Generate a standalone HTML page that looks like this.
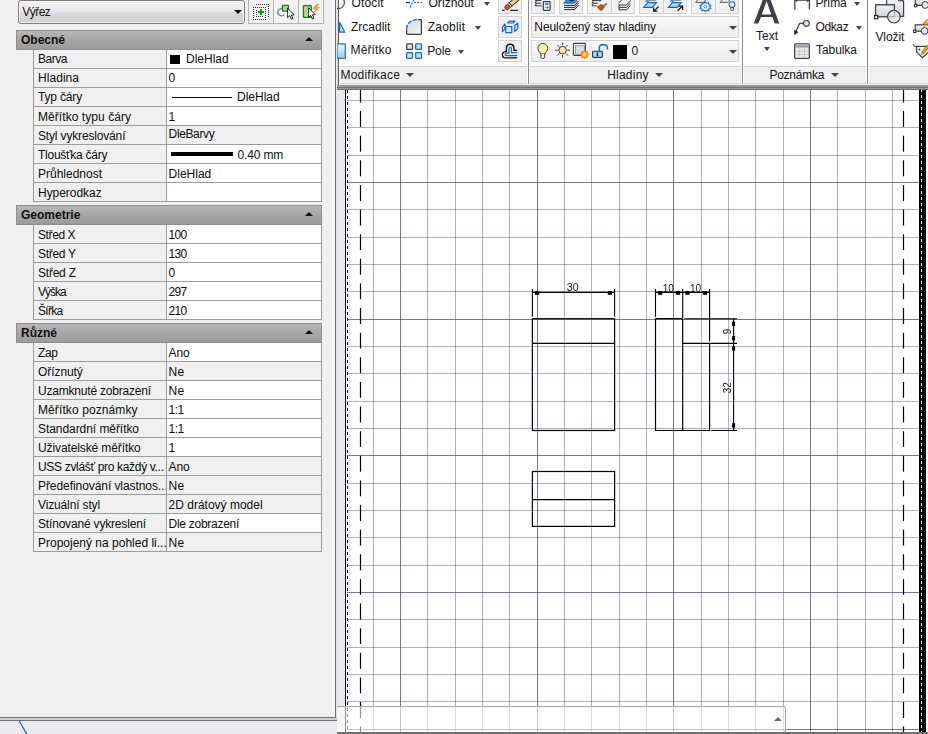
<!DOCTYPE html>
<html><head><meta charset="utf-8"><title>AutoCAD</title>
<style>
html,body{margin:0;padding:0;}
body{width:928px;height:734px;overflow:hidden;position:relative;background:#f0f0f0;font-family:"Liberation Sans",sans-serif;font-size:12px;color:#0c0c0c;}
.abs{position:absolute;}
.t{position:absolute;white-space:nowrap;line-height:14px;height:14px;font-size:12px;color:#141414;}
.hdr{position:absolute;left:16px;width:306px;height:20px;background:linear-gradient(#b9b9b9,#a8a8a8 45%,#9a9a9a);box-shadow:inset 0 0 0 1px #8e8e8e;}
.hdr b{position:absolute;left:5px;top:3px;font-size:12px;line-height:14px;color:#111;}
.hdr i{position:absolute;left:288.6px;top:6.8px;width:0;height:0;border-left:4px solid transparent;border-right:4px solid transparent;border-bottom:4px solid #111;}
.row{position:absolute;left:33px;width:287px;height:18px;border-left:1px solid #9c9c9c;border-right:1px solid #9c9c9c;border-bottom:1px solid #9c9c9c;box-sizing:content-box;background:#f0f0f0;}
.row .l{position:absolute;left:4px;top:3px;line-height:14px;white-space:nowrap;}
.row .v{position:absolute;left:132px;top:0;width:154px;height:18px;border-left:1px solid #9c9c9c;background:#fff;}
.row .v.g{background:#f0f0f0;}
.row .v span{position:absolute;left:1.6px;top:3px;line-height:14px;white-space:nowrap;}

.btn{position:absolute;background:#f1f1f1;border:1px solid #d2d2d2;box-sizing:border-box;}
.sep{position:absolute;top:0;width:1px;height:84px;background:#8c8c8c;}
.ttl{position:absolute;top:66px;height:18px;background:#f0f0f0;border-top:1px solid #d2d4d6;border-bottom:1px solid #d0d2d4;box-sizing:border-box;}
.dd{position:absolute;width:0;height:0;border-left:3px solid transparent;border-right:3px solid transparent;border-top:4px solid #444;}
.dd2{position:absolute;width:0;height:0;border-left:4px solid transparent;border-right:4px solid transparent;border-top:4px solid #444;}
</style></head><body>

<!-- drawing canvas -->
<div class="abs" style="left:337px;top:90px;width:591px;height:644px;background:#e9eaee;"></div>
<div class="abs" style="left:346px;top:90px;width:573px;height:644px;background:#fff;"></div>
<svg class="abs" style="left:0;top:0" width="928" height="734" viewBox="0 0 928 734">
<g shape-rendering="crispEdges" stroke-width="1">
<line x1="373.5" y1="90" x2="373.5" y2="732" stroke="#3c4064" stroke-opacity="0.42"/>
<line x1="400.5" y1="90" x2="400.5" y2="732" stroke="#3c4064" stroke-opacity="0.70"/>
<line x1="427.5" y1="90" x2="427.5" y2="732" stroke="#3c4064" stroke-opacity="0.42"/>
<line x1="455.5" y1="90" x2="455.5" y2="732" stroke="#3c4064" stroke-opacity="0.42"/>
<line x1="482.5" y1="90" x2="482.5" y2="732" stroke="#3c4064" stroke-opacity="0.42"/>
<line x1="509.5" y1="90" x2="509.5" y2="732" stroke="#3c4064" stroke-opacity="0.42"/>
<line x1="537.5" y1="90" x2="537.5" y2="732" stroke="#3c4064" stroke-opacity="0.70"/>
<line x1="564.5" y1="90" x2="564.5" y2="732" stroke="#3c4064" stroke-opacity="0.42"/>
<line x1="591.5" y1="90" x2="591.5" y2="732" stroke="#3c4064" stroke-opacity="0.42"/>
<line x1="619.5" y1="90" x2="619.5" y2="732" stroke="#3c4064" stroke-opacity="0.42"/>
<line x1="646.5" y1="90" x2="646.5" y2="732" stroke="#3c4064" stroke-opacity="0.42"/>
<line x1="673.5" y1="90" x2="673.5" y2="732" stroke="#3c4064" stroke-opacity="0.70"/>
<line x1="701.5" y1="90" x2="701.5" y2="732" stroke="#3c4064" stroke-opacity="0.42"/>
<line x1="728.5" y1="90" x2="728.5" y2="732" stroke="#3c4064" stroke-opacity="0.42"/>
<line x1="755.5" y1="90" x2="755.5" y2="732" stroke="#3c4064" stroke-opacity="0.42"/>
<line x1="783.5" y1="90" x2="783.5" y2="732" stroke="#3c4064" stroke-opacity="0.42"/>
<line x1="810.5" y1="90" x2="810.5" y2="732" stroke="#3c4064" stroke-opacity="0.70"/>
<line x1="837.5" y1="90" x2="837.5" y2="732" stroke="#3c4064" stroke-opacity="0.42"/>
<line x1="865.5" y1="90" x2="865.5" y2="732" stroke="#3c4064" stroke-opacity="0.42"/>
<line x1="892.5" y1="90" x2="892.5" y2="732" stroke="#3c4064" stroke-opacity="0.42"/>
<line x1="347" y1="100.5" x2="919" y2="100.5" stroke="#3c4064" stroke-opacity="0.42"/>
<line x1="347" y1="127.5" x2="919" y2="127.5" stroke="#3c4064" stroke-opacity="0.42"/>
<line x1="347" y1="155.5" x2="919" y2="155.5" stroke="#3c4064" stroke-opacity="0.42"/>
<line x1="347" y1="182.5" x2="919" y2="182.5" stroke="#3c4064" stroke-opacity="0.70"/>
<line x1="347" y1="209.5" x2="919" y2="209.5" stroke="#3c4064" stroke-opacity="0.42"/>
<line x1="347" y1="237.5" x2="919" y2="237.5" stroke="#3c4064" stroke-opacity="0.42"/>
<line x1="347" y1="264.5" x2="919" y2="264.5" stroke="#3c4064" stroke-opacity="0.42"/>
<line x1="347" y1="291.5" x2="919" y2="291.5" stroke="#3c4064" stroke-opacity="0.42"/>
<line x1="347" y1="319.5" x2="919" y2="319.5" stroke="#3c4064" stroke-opacity="0.70"/>
<line x1="347" y1="346.5" x2="919" y2="346.5" stroke="#3c4064" stroke-opacity="0.42"/>
<line x1="347" y1="373.5" x2="919" y2="373.5" stroke="#3c4064" stroke-opacity="0.42"/>
<line x1="347" y1="401.5" x2="919" y2="401.5" stroke="#3c4064" stroke-opacity="0.42"/>
<line x1="347" y1="428.5" x2="919" y2="428.5" stroke="#3c4064" stroke-opacity="0.42"/>
<line x1="347" y1="455.5" x2="919" y2="455.5" stroke="#3c4064" stroke-opacity="0.70"/>
<line x1="347" y1="483.5" x2="919" y2="483.5" stroke="#3c4064" stroke-opacity="0.42"/>
<line x1="347" y1="510.5" x2="919" y2="510.5" stroke="#3c4064" stroke-opacity="0.42"/>
<line x1="347" y1="537.5" x2="919" y2="537.5" stroke="#3c4064" stroke-opacity="0.42"/>
<line x1="347" y1="565.5" x2="919" y2="565.5" stroke="#3c4064" stroke-opacity="0.42"/>
<line x1="347" y1="592.5" x2="919" y2="592.5" stroke="#3c4064" stroke-opacity="0.70"/>
<line x1="347" y1="619.5" x2="919" y2="619.5" stroke="#3c4064" stroke-opacity="0.42"/>
<line x1="347" y1="647.5" x2="919" y2="647.5" stroke="#3c4064" stroke-opacity="0.42"/>
<line x1="347" y1="674.5" x2="919" y2="674.5" stroke="#3c4064" stroke-opacity="0.42"/>
<line x1="347" y1="701.5" x2="919" y2="701.5" stroke="#3c4064" stroke-opacity="0.42"/>
<line x1="347" y1="729.5" x2="919" y2="729.5" stroke="#3c4064" stroke-opacity="0.70"/>
</g>
<g shape-rendering="crispEdges">
<rect x="345" y="90" width="1" height="642" fill="#000"/>
<line x1="347.5" y1="90" x2="347.5" y2="732" stroke="#000" stroke-width="1" stroke-dasharray="3 3" stroke-dashoffset="0"/>
<rect x="919" y="90" width="7" height="642" fill="#000"/>
<line x1="921.5" y1="89" x2="921.5" y2="732" stroke="#fff" stroke-width="1" stroke-dasharray="3 3"/>
<rect x="926" y="90" width="2" height="642" fill="#f4f4f7"/>
</g>
<g stroke="#000" stroke-width="1.2" stroke-dasharray="15.9 8.72">
<line x1="360.5" y1="86.5" x2="360.5" y2="732"/>
<line x1="903.5" y1="86.5" x2="903.5" y2="732"/>
</g>
<g stroke="#000" stroke-width="1.2" fill="none">
<rect x="532.4" y="318.7" width="82.2" height="111.8"/>
<line x1="532.4" y1="343.4" x2="614.6" y2="343.4"/>
<rect x="532.4" y="471.5" width="82.2" height="54.9"/>
<line x1="532.4" y1="499.6" x2="614.6" y2="499.6"/>
<path d="M655.5 318.7H682.7 M655.5 318.7V430.5H709.6V343.4H682.7 M682.7 318.7V430.5"/>
</g>
<g stroke="#000" stroke-width="1.1" fill="none">
<path d="M532.4 289V316.8 M614.6 289V316.8 M532.4 292.4H614.6"/>
<path d="M655.5 289V316.8 M682.7 289V318 M709.6 289V341.6 M655.5 292.4H709.6"/>
<path d="M684.4 318.7H737 M710.4 343.4H737 M711.3 430.5H737 M733.6 318.7V430.5"/>
</g>
<g fill="#000" stroke="none">
<path d="M532.4 292.4L539.2 291.4V293.4Z"/><rect x="535.0" y="291.0" width="4.2" height="3.8"/>
<path d="M614.6 292.4L607.8 291.4V293.4Z"/><rect x="607.8" y="291.0" width="4.2" height="3.8"/>
<path d="M655.5 292.4L662.3 291.4V293.4Z"/><rect x="658.1" y="291.0" width="4.2" height="3.8"/>
<path d="M682.7 292.4L675.9 291.4V293.4Z"/><rect x="675.9" y="291.0" width="4.2" height="3.8"/>
<path d="M682.7 292.4L689.5 291.4V293.4Z"/><rect x="685.3" y="291.0" width="4.2" height="3.8"/>
<path d="M709.6 292.4L702.8 291.4V293.4Z"/><rect x="702.8" y="291.0" width="4.2" height="3.8"/>
<path d="M733.6 318.7L732.6 325.9H734.6Z"/><rect x="732.1" y="321.7" width="3" height="4.2"/>
<path d="M733.6 343.4L732.6 336.2H734.6Z"/><rect x="732.1" y="336.2" width="3" height="4.2"/>
<path d="M733.6 343.4L732.6 350.6H734.6Z"/><rect x="732.1" y="346.4" width="3" height="4.2"/>
<path d="M733.6 430.5L732.6 423.3H734.6Z"/><rect x="732.1" y="423.3" width="3" height="4.2"/>
</g>
</svg>
<svg class="abs" style="left:0;top:0;will-change:transform;transform:translateZ(0)" width="928" height="734" viewBox="0 0 928 734">
<g font-family="Liberation Sans, sans-serif" font-size="10" fill="#111" text-anchor="middle" opacity="0.999">
<text x="572.7" y="290.9" textLength="11.9" lengthAdjust="spacingAndGlyphs">30</text>
<text x="668.3" y="292.4">10</text>
<text x="695.6" y="292.4">10</text>
<text transform="translate(730.7 331.5) rotate(-90)" x="0" y="0">9</text>
<text transform="translate(730.7 387.7) rotate(-90)" x="0" y="0">32</text>
</g>
</svg>
<div class="abs" style="left:337px;top:706px;width:449px;height:27px;background:rgba(255,255,255,0.56);border:1px solid #a4a4a4;border-left:none;border-radius:0 3px 3px 0;box-sizing:border-box;"></div>
<div class="abs" style="left:774px;top:717px;width:0;height:0;border-left:4px solid transparent;border-right:4px solid transparent;border-bottom:4px solid #6a6a6a;"></div>
<div class="abs" style="left:337px;top:732px;width:591px;height:2px;background:#707070;"></div>
<!-- ribbon -->
<div class="abs" style="left:337px;top:0;width:591px;height:90px;background:#fff;"></div>
<div class="abs" style="left:337px;top:0;width:1px;height:88px;background:#dcdcdc;"></div>
<div class="abs" style="left:338px;top:0;width:1px;height:88px;background:#585858;"></div>
<div class="abs" style="left:337px;top:85px;width:591px;height:1px;background:#8a8a8a;"></div>
<div class="abs" style="left:337px;top:86px;width:591px;height:1px;background:#a8a8a8;"></div>
<div class="abs" style="left:337px;top:87px;width:591px;height:1px;background:#6a6a6a;"></div>
<div class="abs" style="left:337px;top:88px;width:591px;height:1px;background:#9a9a9a;"></div>
<div class="abs" style="left:337px;top:89px;width:591px;height:1px;background:#6e6e6e;"></div>
<div class="ttl" style="left:339px;width:188px;border-left:1px solid #fafafa;"></div>
<div class="ttl" style="left:530px;width:211px;"></div>
<div class="ttl" style="left:744px;width:122px;"></div>
<div class="ttl" style="left:869px;width:59px;"></div>
<div class="sep" style="left:528px;"></div><div class="sep" style="left:742px;"></div><div class="sep" style="left:867px;"></div>
<div class="btn" style="left:498px;top:-8px;width:24px;height:22px;"></div>
<div class="btn" style="left:498px;top:16px;width:24px;height:22px;"></div>
<div class="btn" style="left:498px;top:40px;width:24px;height:22px;"></div>
<div class="btn" style="left:531px;top:-8px;width:24px;height:22px;"></div>
<div class="btn" style="left:559px;top:-8px;width:24px;height:22px;"></div>
<div class="btn" style="left:587px;top:-8px;width:48px;height:22px;"></div>
<div class="btn" style="left:639px;top:-8px;width:48px;height:22px;"></div>
<div class="btn" style="left:691px;top:-8px;width:48px;height:22px;"></div>
<div class="abs" style="left:611px;top:0;width:1px;height:13px;background:#d2d2d2;"></div>
<div class="abs" style="left:663px;top:0;width:1px;height:13px;background:#d2d2d2;"></div>
<div class="abs" style="left:715px;top:0;width:1px;height:13px;background:#d2d2d2;"></div>
<div class="btn" style="left:531px;top:16px;width:208px;height:22px;background:linear-gradient(#fafafa,#ececec);"></div>
<div class="btn" style="left:531px;top:40px;width:208px;height:22px;background:linear-gradient(#fafafa,#ececec);"></div>
<div class="abs" style="left:613px;top:45px;width:14px;height:14px;background:#000;"></div>
<div class="t" style="left:351.5px;top:-4.5px;letter-spacing:0.16px;">Otočit</div>
<div class="t" style="left:351px;top:19.5px;">Zrcadlit</div>
<div class="t" style="left:350.6px;top:43px;letter-spacing:0.12px;">Měřítko</div>
<div class="t" style="left:428.5px;top:-4.5px;letter-spacing:-0.1px;">Oříznout</div>
<div class="t" style="left:427.8px;top:19.5px;letter-spacing:0.2px;">Zaoblit</div>
<div class="t" style="left:427.2px;top:43.5px;letter-spacing:-0.1px;">Pole</div>
<div class="t" style="left:340.4px;top:67.5px;letter-spacing:0.24px;">Modifikace</div>
<div class="t" style="left:534.3px;top:19.5px;letter-spacing:-0.08px;">Neuložený stav hladiny</div>
<div class="t" style="left:631.5px;top:43.5px;">0</div>
<div class="t" style="left:607.2px;top:67.5px;letter-spacing:0.22px;">Hladiny</div>
<div class="t" style="left:756px;top:29.299999999999997px;">Text</div>
<div class="t" style="left:815.5px;top:-4.5px;letter-spacing:-0.22px;">Přímá</div>
<div class="t" style="left:815.5px;top:19.5px;letter-spacing:-0.38px;">Odkaz</div>
<div class="t" style="left:816px;top:43px;letter-spacing:-0.07px;">Tabulka</div>
<div class="t" style="left:769.4px;top:67.5px;letter-spacing:-0.24px;">Poznámka</div>
<div class="t" style="left:875.4px;top:29.5px;letter-spacing:-0.06px;">Vložit</div>
<div class="dd" style="left:483.5px;top:2px;"></div>
<div class="dd" style="left:474.5px;top:26px;"></div>
<div class="dd" style="left:457.5px;top:50px;"></div>
<div class="dd2" style="left:406px;top:73px;"></div>
<div class="dd2" style="left:655px;top:73px;"></div>
<div class="dd2" style="left:831px;top:73px;"></div>
<div class="dd2" style="left:728.5px;top:25.5px;"></div>
<div class="dd2" style="left:728.5px;top:49.5px;"></div>
<div class="dd" style="left:763.5px;top:47px;"></div>
<div class="dd" style="left:853.5px;top:2px;"></div>
<div class="dd" style="left:855.5px;top:26px;"></div>

<svg class="abs" style="left:0;top:0" width="928" height="90" viewBox="0 0 928 90">
<defs>
<linearGradient id="gb" x1="0" y1="0" x2="0" y2="1"><stop offset="0" stop-color="#eef6fb"/><stop offset="1" stop-color="#9ecbe6"/></linearGradient>
<linearGradient id="gg" x1="0" y1="0" x2="0" y2="1"><stop offset="0" stop-color="#f4f5f6"/><stop offset="1" stop-color="#cfd3d8"/></linearGradient>
<linearGradient id="gg2" x1="0" y1="0" x2="1" y2="1"><stop offset="0" stop-color="#d4d7db"/><stop offset="1" stop-color="#f6f6f7"/></linearGradient>
<radialGradient id="gs"><stop offset="0" stop-color="#fff27a"/><stop offset="0.5" stop-color="#ffc820"/><stop offset="1" stop-color="#ff7a00"/></radialGradient>
</defs>
<!-- rotate arc -->
<circle cx="338.4" cy="2.6" r="6" fill="none" stroke="#4a4e56" stroke-width="1.2"/>
<!-- mirror triangle -->
<path d="M339.6 22.2L344.8 32.2H339.6Z" fill="#cfe4f3" stroke="#1b6ec2" stroke-width="1.2"/>
<!-- scale rect -->
<rect x="337" y="43.9" width="8.3" height="14.4" fill="url(#gb)" stroke="#1b6ec2" stroke-width="1.2"/>
<!-- trim -->
<path d="M406 2.5H410" stroke="#222" stroke-width="1.2" fill="none"/>
<path d="M414 -0.5L409.3 8.8" stroke="#1565c8" stroke-width="1.3" stroke-dasharray="2.2 1.2" fill="none"/>
<path d="M414 2.5H422" stroke="#1565c8" stroke-width="1.2" stroke-dasharray="2 1.2" fill="none"/>
<!-- fillet -->
<path d="M418 19.6H420.6Q421.4 19.6 421.4 20.4V33.6Q421.4 34.4 420.6 34.4H407.4Q406.6 34.4 406.6 33.6V29.5C406.6 24 411 19.6 418 19.6Z" fill="url(#gg2)" stroke="none"/>
<path d="M418 19.6H420.6Q421.4 19.6 421.4 20.4V33.6Q421.4 34.4 420.6 34.4H407.4Q406.6 34.4 406.6 33.6V29.6" fill="none" stroke="#3a3f48" stroke-width="1.3"/>
<path d="M406.6 29.3C406.6 23.6 411 19.6 417.2 19.6" fill="none" stroke="#1565c8" stroke-width="1.4" stroke-dasharray="4.5 1.2"/>
<!-- array -->
<rect x="406.7" y="43.8" width="5.8" height="5.6" rx="0.6" fill="#ececee" stroke="#3a3f48" stroke-width="1.3"/>
<rect x="415.7" y="43.8" width="5.8" height="5.6" rx="0.6" fill="#c6dfee" stroke="#1b6ec2" stroke-width="1.3"/>
<rect x="406.7" y="52.7" width="5.8" height="5.6" rx="0.6" fill="#c6dfee" stroke="#1b6ec2" stroke-width="1.3"/>
<rect x="415.7" y="52.7" width="5.8" height="5.6" rx="0.6" fill="#c6dfee" stroke="#1b6ec2" stroke-width="1.3"/>
<!-- eraser -->
<g>
<path d="M502 10.4H504.7 M510.2 10.4H518" stroke="#2a2a2a" stroke-width="1.1" fill="none"/>
<path d="M509.1 2.8L518 -5L520.9 -1.7L512 6.1Z" fill="#dcb87e" stroke="#2e2214" stroke-width="1"/>
<path d="M510.6 3.2L518.6 -3.8L519.4 -2.9L511.4 4.1Z" fill="#f6e8c6"/>
<path d="M507.45 4.2L509.1 2.8L512 6.1L510.35 7.5Z" fill="#f2f2f2" stroke="#2e2214" stroke-width="0.8"/>
<ellipse cx="507.3" cy="7.2" rx="2.7" ry="2.35" transform="rotate(-41 507.3 7.2)" fill="#e24e08" stroke="#7a2600" stroke-width="0.7"/>
</g>
<!-- explode box -->
<g stroke="#1565c8" stroke-width="1.2" stroke-linejoin="round">
<path d="M511.8 26.6L514 24.4V30.4L511.8 32.6Z" fill="#eef6fa" stroke="#b8d4e8" stroke-width="0.8"/>
<rect x="505.7" y="26.5" width="6.1" height="6.2" fill="#cbe6f4"/>
<path d="M507.6 23L509.6 21.2H515L513 23Z" fill="#e3f1f9"/>
<path d="M502.4 27.2L505 23.9V28.8L502.4 31.6Z" fill="#d8ebf6"/>
<path d="M514.8 25.4L517.8 22.9V28.6L514.8 31.6Z" fill="#d8ebf6"/>
</g>
<!-- offset -->
<path d="M517.2 57.9H505.4C502.8 57.9 502.4 55.8 502.4 54.6C502.4 52.4 503.8 51.6 506.4 51.6V48.6C506.4 45.6 508 44.3 510.2 44.3C512.4 44.3 514 45.6 514 48.6V50.4H517.2" fill="none" stroke="#111" stroke-width="1.4"/>
<path d="M517.2 55.6H506.4C505.4 55.6 505.2 55 505.2 54.4C505.2 53.6 505.6 53.2 506.6 53.2H509V49.2C509 47.6 509.4 47 510.2 47C511 47 511.5 47.6 511.5 49.2V52.6H517.2" fill="none" stroke="#1565c8" stroke-width="1.2"/>

<!-- layer toolbar icons -->
<g stroke="#333a44" stroke-width="1" fill="none">
<path d="M535.2 0.6H541.4 M536.6 0.6L535.2 3.2H541 M536.6 3.2L535.2 5.8H541.6"/>
<rect x="543.3" y="1.6" width="6.8" height="8.8" rx="0.8" fill="#fff" stroke-width="1.2"/>
</g>
<rect x="545" y="3.2" width="3.4" height="1.6" fill="#1b6ec2"/>
<path d="M544.8 7.4H548.4 M547 6.2L548.4 7.4L547 8.6" stroke="#1b6ec2" stroke-width="0.8" fill="none"/>
<!-- icon 2 stack -->
<path d="M568 -2L563.6 3.2H574.4L578.8 -2Z" fill="#3b8ad4" stroke="#15508f" stroke-width="0.8"/>
<ellipse cx="571.6" cy="0" rx="2.4" ry="1.2" fill="#123"/>
<g stroke="#222a33" stroke-width="1" fill="none">
<path d="M564 5.4H574.6L578.6 0.8 M564 7.4H574.6L578.6 2.8 M564 9.6H574.6L578.6 5"/>
</g>
<!-- icon 3 layers + brush -->
<g stroke="#333a44" stroke-width="1" fill="none">
<path d="M592 0.6H601 M593.6 0.6L592 3.2H598 M593.6 3.2L592 5.8H596.6 M601.4 -0.5L600 1.4"/>
</g>
<path d="M597.2 6.6L601.6 4.2L604.4 7.6L601.2 10.8Q598.6 9.8 597.2 6.6Z" fill="#b55a12" stroke="#7a3a08" stroke-width="0.5"/>
<path d="M602.8 5.8L606.4 3.2L607 4L604 6.8Z" fill="#c8823a" stroke="#5a3210" stroke-width="0.5"/>
<!-- icon 4 layers outline -->
<g stroke="#333a44" stroke-width="1" fill="none">
<path d="M618.4 5H626.6L630.6 0.4 M618.6 7.4H626.6L630.6 2.8 M618.6 9.8H626.6L630.6 5.2 M622 -0.5L618.4 3.4 M620 5L618.4 7.2 M620 7.6L618.4 9.6"/>
</g>
<!-- icon 5 -->
<path d="M647.6 2.6L643.6 7.4H652.4L656.4 2.6Z" fill="#a8d4ee" stroke="#1565c8" stroke-width="1.1"/>
<path d="M646 0H656 M645.2 1.2H649" stroke="#1565c8" stroke-width="1" fill="none"/>
<path d="M648.6 -0.6H656.4" stroke="#222" stroke-width="1.4" fill="none"/>
<path d="M658.6 6.6L654.4 10.6 M653.6 7.4V11.2H657.4" stroke="#111" stroke-width="1.3" fill="none"/>
<!-- icon 6 -->
<path d="M672.4 2.6L668.4 7.4H677.2L681.2 2.6Z" fill="#a8d4ee" stroke="#1565c8" stroke-width="1.1"/>
<path d="M670.8 0H680.8 M670 1.2H673.8" stroke="#1565c8" stroke-width="1" fill="none"/>
<path d="M673.4 -0.6H681.2" stroke="#222" stroke-width="1.4" fill="none"/>
<path d="M677.6 10.8L682 6.6 M678.6 6.2H682.6V10" stroke="#111" stroke-width="1.3" fill="none"/>
<!-- icon 7 snowflake -->
<path d="M698.4 -0.5L695.6 2.4H703.6L706 -0.5" stroke="#555c66" stroke-width="1" fill="none"/>
<g stroke="#1b6ec2" stroke-width="1.1" fill="#eef6fc">
<path d="M705.4 1.8L707 3.4L708.8 2.6L708.8 4.6L710.8 5.4L709.6 6.8L710.8 8.4L708.8 9L708.8 10.8L707 10.2L705.4 11.4L703.8 10.2L702 10.8L702 9L700 8.4L701.2 6.8L700 5.4L702 4.6L702 2.6L703.8 3.4Z"/>
</g>
<circle cx="705.4" cy="6.6" r="1.3" fill="#fff" stroke="#1b6ec2" stroke-width="0.8"/>
<!-- icon 8 bulb -->
<path d="M722.8 -0.5L720 2.4H728L730.4 -0.5" stroke="#555c66" stroke-width="1" fill="none"/>
<circle cx="732" cy="4.6" r="2.9" fill="#e4f1fb" stroke="#1b6ec2" stroke-width="1.1"/>
<rect x="730.8" y="7.4" width="2.6" height="3" rx="0.6" fill="#fff" stroke="#2b3a55" stroke-width="1"/>

<!-- combo2 icons -->
<!-- bulb -->
<path d="M542.8 43.5C539.8 43.5 537.9 45.7 537.9 48.2C537.9 50.6 539.6 51.8 540.6 53.8H545C546 51.8 547.7 50.6 547.7 48.2C547.7 45.7 545.8 43.5 542.8 43.5Z" fill="#fdf0ae" stroke="#3c3a30" stroke-width="1"/>
<path d="M540.9 53.8V56.8Q540.9 58.5 542.8 58.5Q544.7 58.5 544.7 56.8V53.8" fill="#fafafa" stroke="#3c3a30" stroke-width="1"/>
<path d="M540.2 46.6Q541 44.8 543 44.8" stroke="#fffbe4" stroke-width="1" fill="none"/>
<!-- sun -->
<g stroke="#3a3a3a" stroke-width="1" fill="none">
<path d="M562.6 42.7V45.4 M562.6 55V57.7 M555 50.2H557.8 M567.4 50.2H570.2 M557.3 44.9L559.2 46.8 M566 53.6L567.9 55.5 M557.3 55.5L559.2 53.6 M566 46.8L567.9 44.9"/>
</g>
<circle cx="562.6" cy="50.2" r="3.8" fill="#fce9a6" stroke="#3a3a3a" stroke-width="1"/>
<!-- vp freeze -->
<rect x="573.4" y="43.4" width="12" height="12" rx="0.8" fill="#fff" stroke="#3a3f48" stroke-width="1.1"/>
<rect x="575.6" y="45.6" width="9" height="9" fill="#d9dce2" stroke="#8a9098" stroke-width="0.8"/>
<g fill="#ff8a00"><path d="M584.5 49.4L585.6 51.4L587.8 50.8L587.6 53L589.6 54.4L587.6 55.8L587.8 58L585.6 57.6L584.5 59.6L583.4 57.6L581.2 58L581.4 55.8L579.4 54.4L581.4 53L581.2 50.8L583.4 51.4Z"/></g>
<circle cx="584.5" cy="54.5" r="3.2" fill="url(#gs)"/>
<circle cx="584.5" cy="54.5" r="1.6" fill="#fff58a"/>
<!-- lock -->
<path d="M599.3 51V47.8C599.3 45.6 600.8 44.6 603.2 44.6C605.8 44.6 607.4 45.8 607.4 47.8V49.4" fill="none" stroke="#2a7ab8" stroke-width="1.6"/>
<rect x="592.6" y="51.2" width="9.8" height="6.2" rx="0.8" fill="#a8daf2" stroke="#1d3c5e" stroke-width="1.1"/>
<rect x="596.6" y="52.4" width="1.6" height="3.8" fill="#1d3c5e"/>

<!-- Big A -->
<path d="M753.8 23.5L762.7 0L764.6 -5H768.7L770.6 0L779.3 23.5H774.7L772.3 17H760.9L758.4 23.5Z M761.9 14.4H771.3L766.55 1Z" fill="#3d4048" fill-rule="evenodd"/>
<!-- dim icon -->
<path d="M794.8 -0.5V9.6 M809.4 -0.5V9.6" stroke="#3a3f48" stroke-width="1.3" fill="none"/>
<path d="M794.8 0.1H809.4" stroke="#2e323a" stroke-width="1.2" fill="none"/><path d="M795.4 0.2L797.6 0.2L796.6 2.2Z M808.8 0.2L806.6 0.2L807.6 2.2Z" fill="#2e323a"/>
<!-- leader -->
<circle cx="806.4" cy="23.4" r="2.9" fill="#e6e8ec" stroke="#3a3f48" stroke-width="1.1"/>
<path d="M803.4 23.4H799.6L795.6 32.4" fill="none" stroke="#3a3f48" stroke-width="1.2"/>
<path d="M794.1 35.3L794.3 29.6L798.6 32.2Z" fill="#2e323a"/>
<!-- table -->
<rect x="794.7" y="43.8" width="14.6" height="14.6" rx="1" fill="#fff" stroke="#3a3f48" stroke-width="1.3"/>
<rect x="795.4" y="44.5" width="13.2" height="2.3" fill="#a9b3c6"/>
<path d="M795.4 47H808.6" stroke="#5a6070" stroke-width="0.8"/>
<g fill="#e3e5ea"><rect x="796.3" y="48.2" width="2.8" height="2.4"/><rect x="800.4" y="48.2" width="3.4" height="2.4"/><rect x="805" y="48.2" width="2.8" height="2.4"/>
<rect x="796.3" y="51.8" width="2.8" height="2.4"/><rect x="800.4" y="51.8" width="3.4" height="2.4"/><rect x="805" y="51.8" width="2.8" height="2.4"/>
<rect x="796.3" y="55.3" width="2.8" height="2.2"/><rect x="800.4" y="55.3" width="3.4" height="2.2"/><rect x="805" y="55.3" width="2.8" height="2.2"/></g>
<path d="M799.7 47V57.8 M804.4 47V57.8 M795.4 51.2H808.6 M795.4 54.7H808.6" stroke="#b9bcc4" stroke-width="0.8" fill="none"/>
<!-- insert icon -->
<path d="M886.6 -0.5V16.4H903.6V1.2L900.4 -0.5Z" fill="url(#gg)" stroke="#3a3f48" stroke-width="1.2"/>
<path d="M898.4 -0.5V0.8H903" fill="none" stroke="#3a3f48" stroke-width="1"/>
<rect x="875.6" y="4.8" width="18.8" height="12" fill="url(#gg)" stroke="#3a3f48" stroke-width="1.3"/>
<circle cx="893.9" cy="16.7" r="6.3" fill="#e4e6ea" fill-opacity="0.85" stroke="#3a3f48" stroke-width="1.2"/>
<path d="M894.4 10.6V16.8H888" stroke="#a8acb4" stroke-width="1" fill="none"/>
<rect x="874.5" y="15.5" width="3.2" height="3.2" fill="#fff" stroke="#23262c" stroke-width="1.2"/>
<!-- right small icons -->
<rect x="915.4" y="-1" width="14" height="6.4" fill="url(#gg)" stroke="#3a3f48" stroke-width="1.2"/>
<circle cx="925.2" cy="5" r="3.4" fill="#e8eaee" stroke="#3a3f48" stroke-width="1"/>
<rect x="914.4" y="4.4" width="2.4" height="2.4" fill="#fff" stroke="#23262c" stroke-width="1"/>
<rect x="915.2" y="24.8" width="14" height="6.4" fill="url(#gg)" stroke="#3a3f48" stroke-width="1.2"/>
<circle cx="924.6" cy="31" r="3.4" fill="#e8eaee" stroke="#3a3f48" stroke-width="1"/>
<rect x="913.6" y="30.2" width="2.4" height="2.4" fill="#fff" stroke="#23262c" stroke-width="1"/>
<path d="M926.4 19.6L922.4 24H925.6L923.6 27.2L928.6 22.4H925.4L928.6 19.6Z" fill="#ff9a10" stroke="#e07000" stroke-width="0.5"/>
<path d="M913.2 44.2Q913.6 46.6 916.4 47" fill="none" stroke="#23262c" stroke-width="1"/>
<path d="M916.6 46.4H928.6V52L922.4 57.6L916.6 52Z" fill="#fff" stroke="#3a3f48" stroke-width="1.2"/>
<circle cx="919.4" cy="49.4" r="1" fill="#3a3f48"/>
<path d="M921.6 52.2L926.6 45.6L929 47.2L924 53.8Z" fill="#f0a010" stroke="#7a4a00" stroke-width="0.6"/>
<path d="M921.6 52.2L924 53.8L921 55Z" fill="#f4e2c0" stroke="#555" stroke-width="0.5"/>
</svg>


<!-- properties palette -->
<div class="abs" style="left:0;top:0;width:335px;height:717px;background:#f0f0f0;"></div>
<div class="abs" style="left:334px;top:0;width:1px;height:717px;background:#f9f9f9;"></div>
<div class="abs" style="left:335px;top:0;width:1px;height:718px;background:#6c6c6c;"></div>
<div class="abs" style="left:336px;top:0;width:1px;height:720px;background:#e4e5e8;"></div>
<div class="abs" style="left:0;top:717px;width:336px;height:1px;background:#6f6f6f;"></div>
<div class="abs" style="left:0;top:718px;width:337px;height:2px;background:#cfcfcf;"></div>
<div class="abs" style="left:0;top:720px;width:337px;height:1px;background:#6f6f6f;"></div>
<div class="abs" style="left:0;top:721px;width:337px;height:13px;background:#ebebee;"></div>
<svg class="abs" style="left:0;top:716px" width="60" height="18"><line x1="19.2" y1="5" x2="27" y2="18.5" stroke="#1f5cf0" stroke-width="1.3"/></svg>
<div class="abs" style="left:18px;top:0;width:227px;height:24px;border:1px solid #7e7e7e;border-radius:3px;box-sizing:border-box;background:linear-gradient(#f3f3f3,#e8e8e8 48%,#dcdcdc 52%,#cfcfcf);box-shadow:inset 0 0 0 1px rgba(255,255,255,0.75);"></div>
<div class="t" style="left:22.3px;top:5.199999999999999px;letter-spacing:-0.53px;">Výřez</div>
<div class="abs" style="left:234px;top:10.3px;width:0;height:0;border-left:4px solid transparent;border-right:4px solid transparent;border-top:4px solid #111;"></div>
<div class="abs" style="left:248px;top:-2px;width:76px;height:26px;border:1px solid #b4b4b4;box-sizing:border-box;background:#f2f2f2;"></div>
<div class="abs" style="left:273px;top:0;width:1px;height:23px;background:#b4b4b4;"></div>
<div class="abs" style="left:298px;top:0;width:1px;height:23px;background:#b4b4b4;"></div>

<svg class="abs" style="left:244px;top:0" width="84" height="26" viewBox="244 0 84 26">
<path d="M253 7h1v1h-1zM253 9h1v1h-1zM253 11h1v1h-1zM253 13h1v1h-1zM253 15h1v1h-1zM253 17h1v1h-1zM253 19h1v1h-1zM255 7h1v1h-1zM255 19h1v1h-1zM256 4h1v1h-1zM256 10h1v1h-1zM256 12h1v1h-1zM256 14h1v1h-1zM256 16h1v1h-1zM257 7h1v1h-1zM257 19h1v1h-1zM258 4h1v1h-1zM258 16h1v1h-1zM259 7h1v1h-1zM259 19h1v1h-1zM260 4h1v1h-1zM260 16h1v1h-1zM261 7h1v1h-1zM261 19h1v1h-1zM262 4h1v1h-1zM262 16h1v1h-1zM263 7h1v1h-1zM263 19h1v1h-1zM264 4h1v1h-1zM265 7h1v1h-1zM265 9h1v1h-1zM265 11h1v1h-1zM265 13h1v1h-1zM265 15h1v1h-1zM265 17h1v1h-1zM265 19h1v1h-1zM266 4h1v1h-1zM268 4h1v1h-1zM268 6h1v1h-1zM268 8h1v1h-1zM268 10h1v1h-1zM268 12h1v1h-1zM268 14h1v1h-1zM268 16h1v1h-1z" fill="#2c3038" shape-rendering="crispEdges"/>
<path d="M258 11h6v2h-6z M260 9h2v6h-2z" fill="#0c9c0c" shape-rendering="crispEdges"/>
<!-- icon2 -->
<path d="M284.2 14.4A3.6 3.6 0 1 1 282 8.6" fill="none" stroke="#7a7e86" stroke-width="1.2"/>
<rect x="282.4" y="5.4" width="6" height="5.8" rx="0.6" fill="#b7d08f" stroke="#18801c" stroke-width="1.3"/>
<path d="M287.6 8.2V17.6L289.8 15.6L291.4 19.2L293 18.4L291.4 15L294.2 14.8Z" fill="#fff" stroke="#111" stroke-width="0.9" stroke-linejoin="round"/>
<!-- icon3 -->
<rect x="303.4" y="5.6" width="7.8" height="11.8" rx="0.6" fill="#b7d08f" stroke="#18801c" stroke-width="1.3"/>
<path d="M308.6 7.8V17.4L310.8 15.4L312.4 19L314 18.2L312.4 14.8L315.2 14.6Z" fill="#fff" stroke="#111" stroke-width="0.9" stroke-linejoin="round"/>
<path d="M316.8 4.2L312.8 8.6H316L314.2 12.4L319.2 7.2H316L318.8 4.2Z" fill="#ffa51a" stroke="#e87800" stroke-width="0.5"/>
</svg>

<div class="hdr" style="top:30px;"><b>Obecné</b><i></i></div>
<div class="row" style="top:50px;"><div class="l" style="letter-spacing:-0.45px;top:2px;">Barva</div><div class="v"><div style="position:absolute;left:3px;top:4.5px;width:10px;height:9px;background:#000"></div><span style="left:19px;top:2px">DleHlad</span></div></div>
<div class="row" style="top:69px;"><div class="l" style="letter-spacing:0.05px;top:2px;">Hladina</div><div class="v"><span style="top:2px">0</span></div></div>
<div class="row" style="top:88px;"><div class="l" style="letter-spacing:-0.17px;top:2px;">Typ čáry</div><div class="v"><div style="position:absolute;left:5px;top:9px;width:60px;height:1px;background:#000"></div><span style="left:70px;top:2px">DleHlad</span></div></div>
<div class="row" style="top:107px;"><div class="l" style="letter-spacing:0.06px;">Měřítko typu čáry</div><div class="v"><span style="">1</span></div></div>
<div class="row" style="top:126px;"><div class="l" style="letter-spacing:-0.16px;">Styl vykreslování</div><div class="v g"><span style="top:1px;letter-spacing:-0.37px">DleBarvy</span></div></div>
<div class="row" style="top:145px;"><div class="l" style="letter-spacing:-0.25px;">Tloušťka čáry</div><div class="v"><div style="position:absolute;left:4px;top:7px;width:62px;height:4px;background:#000"></div><span style="left:70.5px;letter-spacing:-0.15px">0.40 mm</span></div></div>
<div class="row" style="top:164px;"><div class="l" style="">Průhlednost</div><div class="v"><span style="">DleHlad</span></div></div>
<div class="row" style="top:183px;"><div class="l" style="letter-spacing:-0.04px;">Hyperodkaz</div><div class="v"><span style=""></span></div></div>
<div class="hdr" style="top:205px;"><b>Geometrie</b><i></i></div>
<div class="row" style="top:225px;"><div class="l" style="letter-spacing:-0.4px;">Střed X</div><div class="v"><span style="letter-spacing:-0.7px;">100</span></div></div>
<div class="row" style="top:244px;"><div class="l" style="letter-spacing:-0.3px;">Střed Y</div><div class="v"><span style="letter-spacing:-0.7px;">130</span></div></div>
<div class="row" style="top:263px;"><div class="l" style="letter-spacing:-0.23px;">Střed Z</div><div class="v"><span style="">0</span></div></div>
<div class="row" style="top:282px;"><div class="l" style="letter-spacing:-0.97px;">Výška</div><div class="v"><span style="letter-spacing:-0.7px;">297</span></div></div>
<div class="row" style="top:301px;"><div class="l" style="letter-spacing:-0.72px;">Šířka</div><div class="v"><span style="letter-spacing:-0.7px;">210</span></div></div>
<div class="hdr" style="top:323px;"><b>Různé</b><i></i></div>
<div class="row" style="top:343px;"><div class="l" style="letter-spacing:-0.35px;">Zap</div><div class="v"><span style="letter-spacing:-0.1px;">Ano</span></div></div>
<div class="row" style="top:362px;"><div class="l" style="letter-spacing:-0.07px;">Oříznutý</div><div class="v g"><span style="letter-spacing:0.3px;">Ne</span></div></div>
<div class="row" style="top:381px;"><div class="l" style="letter-spacing:-0.2px;">Uzamknuté zobrazení</div><div class="v"><span style="letter-spacing:0.3px;">Ne</span></div></div>
<div class="row" style="top:400px;"><div class="l" style="letter-spacing:0.1px;">Měřítko poznámky</div><div class="v"><span style="letter-spacing:-0.55px;">1:1</span></div></div>
<div class="row" style="top:419px;"><div class="l" style="letter-spacing:-0.06px;">Standardní měřítko</div><div class="v"><span style="letter-spacing:-0.55px;">1:1</span></div></div>
<div class="row" style="top:438px;"><div class="l" style="letter-spacing:-0.11px;">Uživatelské měřítko</div><div class="v"><span style="">1</span></div></div>
<div class="row" style="top:457px;"><div class="l" style="letter-spacing:-0.32px;">USS zvlášť pro každý v...</div><div class="v g"><span style="letter-spacing:-0.1px;">Ano</span></div></div>
<div class="row" style="top:476px;"><div class="l" style="letter-spacing:-0.07px;">Předefinování vlastnos...</div><div class="v g"><span style="letter-spacing:0.3px;">Ne</span></div></div>
<div class="row" style="top:495px;"><div class="l" style="letter-spacing:-0.14px;">Vizuální styl</div><div class="v g"><span style="">2D drátový model</span></div></div>
<div class="row" style="top:514px;"><div class="l" style="letter-spacing:-0.18px;">Stínované vykreslení</div><div class="v"><span style="letter-spacing:-0.28px;">Dle zobrazení</span></div></div>
<div class="row" style="top:533px;"><div class="l" style="">Propojený na pohled li...</div><div class="v g"><span style="letter-spacing:0.3px;">Ne</span></div></div>
</body></html>
